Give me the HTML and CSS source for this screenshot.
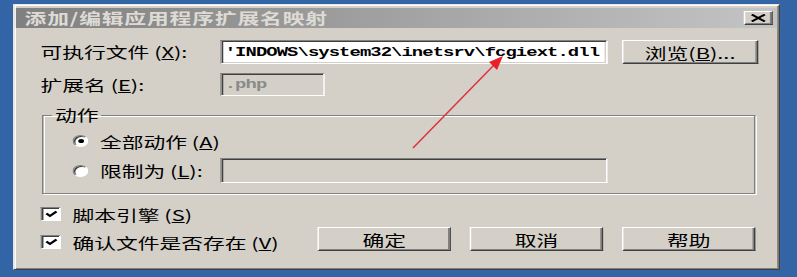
FILE: index.html
```html
<!DOCTYPE html>
<html>
<head>
  <meta charset="utf-8">
  <link rel="stylesheet" href="styles.css">
</head>
<body>
  <div class="dialog">
    <div class="titlebar">
      <span class="title-text">添加/编辑应用程序扩展名映射</span>
      <span class="close-btn">
        <svg width="12" height="8" viewBox="0 0 12 8"><path d="M1.5 0.5 L10.5 7.5 M10.5 0.5 L1.5 7.5" stroke="#000" stroke-width="1.8" fill="none"/></svg>
      </span>
    </div>

    <div class="content">
      <div class="row">
        <label class="field-label">可执行文件 (<u>X</u>):</label>
        <input class="text-input exe-input" type="text" value="'INDOWS\system32\inetsrv\fcgiext.dll">
        <button class="btn browse-btn">浏览(<u>B</u>)...</button>
      </div>
      <div class="row row-ext">
        <label class="field-label">扩展名 (<u>E</u>):</label>
        <input class="text-input ext-input" type="text" value=".php" disabled>
      </div>

      <fieldset class="group">
        <legend class="group-title">动作</legend>
        <div class="option-row option-all">
          <span class="radio checked"></span>
          <span class="option-label">全部动作 (<u>A</u>)</span>
        </div>
        <div class="option-row option-limit">
          <span class="radio"></span>
          <span class="option-label">限制为 (<u>L</u>):</span>
          <input class="text-input limit-input" type="text" disabled>
        </div>
      </fieldset>

      <div class="bottom">
        <div class="checks">
          <div class="check-row">
            <span class="checkbox">
              <svg width="9" height="8" viewBox="0 0 9 8"><path d="M1 3.5 L3.5 6 L8 1.5" stroke="#000" stroke-width="1.8" fill="none"/></svg>
            </span>
            <span>脚本引擎 (<u>S</u>)</span>
          </div>
          <div class="check-row">
            <span class="checkbox">
              <svg width="9" height="8" viewBox="0 0 9 8"><path d="M1 3.5 L3.5 6 L8 1.5" stroke="#000" stroke-width="1.8" fill="none"/></svg>
            </span>
            <span>确认文件是否存在 (<u>V</u>)</span>
          </div>
        </div>
        <div class="buttons">
          <button class="btn">确定</button>
          <button class="btn">取消</button>
          <button class="btn">帮助</button>
        </div>
      </div>
    </div>
  </div>

  <svg class="arrow" width="797" height="277" viewBox="0 0 797 277">
    <line x1="413" y1="148" x2="494" y2="65" stroke="#e0303a" stroke-width="1.5"/>
    <polygon points="503,56 497,70 489,62" fill="#e8202a"/>
  </svg>
</body>
</html>
```

FILE: styles.css
```css
body {
  margin: 0;
  width: 797px;
  height: 277px;
  overflow: hidden;
  position: relative;
  background-color: #3264a6;
  font-family: "Noto Sans CJK SC", sans-serif;
  font-size: 15px;
  color: #000;
}

/* the whole window is stretched sideways, like the screenshot */
.dialog {
  box-sizing: border-box;
  width: 529px;
  height: 266px;
  margin: 4px 0 0 13px;
  padding: 3px 1px 1px 1px;
  background-color: #d4d0c8;
  border: 1px solid;
  border-color: #e8e6e0 #404040 #404040 #e8e6e0;
  box-shadow: inset 1px 1px 0 #fff, inset -1px -1px 0 #808080;
  transform: scaleX(1.45);
  transform-origin: 0 0;
}

.titlebar {
  height: 20px;
  display: flex;
  align-items: center;
  justify-content: space-between;
  padding-left: 6px;
  background: linear-gradient(to right, #808080, #c4c4c4);
}
.title-text {
  color: #dedbd4;
  font-weight: bold;
  line-height: 20px;
  letter-spacing: 0.6px;
}
.close-btn {
  box-sizing: border-box;
  width: 20px;
  height: 14px;
  margin-right: 3px;
  display: flex;
  align-items: center;
  justify-content: center;
  background-color: #d4d0c8;
  border: 1px solid;
  border-color: #fff #404040 #404040 #fff;
  box-shadow: inset -1px -1px 0 #808080;
}

.content {
  padding: 12px 13px 0 17px;
}
.row {
  display: flex;
  align-items: center;
  height: 24px;
}
.row-ext {
  margin-top: 9px;
  height: 23px;
}
.field-label {
  flex: none;
  width: 124px;
  line-height: 20px;
  white-space: nowrap;
}

.text-input {
  box-sizing: border-box;
  height: 24px;
  margin: 0;
  padding: 0 2px;
  border: 1px solid;
  border-color: #808080 #fff #fff #808080;
  box-shadow: inset 1px 1px 0 #404040, inset -1px -1px 0 #d4d0c8;
  background-color: #fff;
  font-family: "Liberation Mono", monospace;
  font-size: 13px;
  font-weight: bold;
  letter-spacing: -0.63px;
  color: #000;
  outline: none;
}
.text-input:disabled {
  background-color: #d4d0c8;
  color: #8a8a8a;
}
.exe-input {
  width: 267px;
}
.ext-input {
  width: 72px;
  height: 23px;
}
.limit-input {
  width: 267px;
  height: 25px;
}

.btn {
  box-sizing: border-box;
  width: 92px;
  height: 24px;
  padding: 0;
  background-color: #d4d0c8;
  border: 1px solid;
  border-color: #fff #404040 #404040 #fff;
  box-shadow: inset -1px -1px 0 #808080;
  font-family: inherit;
  font-size: 15px;
  color: #000;
}
.browse-btn {
  width: 94px;
  margin-left: 10px;
}

.group {
  min-width: 0;
  margin: 10px 2px 0 1px;
  padding: 0 0 10px 0;
  border: 1px solid #808080;
  box-shadow: inset 1px 1px 0 #fff, 1px 1px 0 #fff;
}
.group-title {
  margin-left: 6px;
  padding: 0 2px;
  line-height: 18px;
}
.option-row {
  display: flex;
  align-items: center;
  padding-left: 20px;
  margin-top: 7px;
}
.option-all {
  height: 20px;
}
.option-limit {
  height: 25px;
}
.option-label {
  width: 83px;
  flex: none;
  white-space: nowrap;
}
.option-all .option-label {
  width: auto;
}
.radio {
  box-sizing: border-box;
  width: 11px;
  height: 12px;
  margin-right: 8px;
  flex: none;
  display: flex;
  align-items: center;
  justify-content: center;
  border-radius: 50%;
  border: 1px solid;
  border-color: #808080 #fff #fff #808080;
  box-shadow: inset 1px 1px 0 #404040;
  background-color: #fff;
}
.radio.checked::after {
  content: "";
  width: 4px;
  height: 4px;
  border-radius: 50%;
  background-color: #000;
}

.bottom {
  display: flex;
  align-items: flex-start;
  margin-top: 10px;
}
.checks {
  flex: 1;
}
.check-row {
  display: flex;
  align-items: center;
  height: 20px;
  white-space: nowrap;
}
.check-row + .check-row {
  margin-top: 8px;
}
.checkbox {
  box-sizing: border-box;
  width: 14px;
  height: 14px;
  margin-right: 8px;
  display: flex;
  align-items: center;
  justify-content: center;
  border: 1px solid;
  border-color: #808080 #fff #fff #808080;
  box-shadow: inset 1px 1px 0 #404040;
  background-color: #fff;
}
.buttons {
  display: flex;
  gap: 13px;
  margin-top: 23px;
  margin-right: 2px;
}

.arrow {
  position: absolute;
  left: 0;
  top: 0;
  pointer-events: none;
}
```
